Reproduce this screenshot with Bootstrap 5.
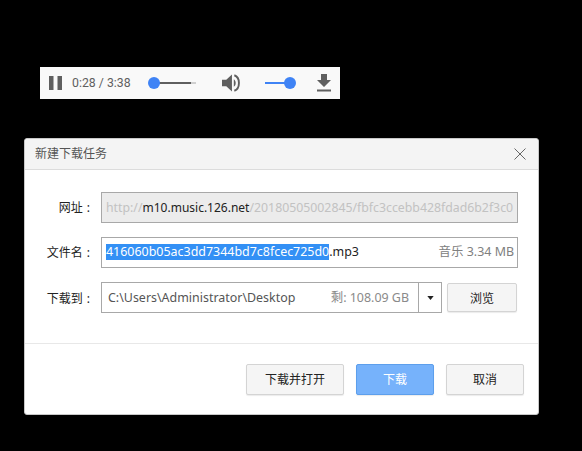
<!DOCTYPE html>
<html lang="zh-CN">
<head>
    <meta charset="UTF-8">
    <meta name="viewport" content="width=device-width, initial-scale=1.0">
    <title>新建下载任务</title>
    <link href="https://cdn.jsdelivr.net/npm/bootstrap@5.3.0/dist/css/bootstrap.min.css" rel="stylesheet">
    <style>
        html, body { height: 100%; overflow: hidden; }
        body { background: #000; padding: 67px 0 0 24px; font-family: "Noto Sans", "Noto Sans CJK SC", sans-serif; font-size: 12px; color: #222; }
        /* audio player */
        .player { width: 300px; height: 32px; margin-left: 16px; background: #f9f9f9; color: #5f5f5f; padding-left: 9px; }
        .player > * { flex: none; }
        .player-time { width: 58px; margin-left: 10px; font-size: 12.3px; font-family: Roboto, "Liberation Sans", sans-serif; white-space: nowrap; }
        .track { height: 2px; position: relative; }
        .track-seek { width: 42px; margin-left: 24px; background: linear-gradient(90deg, #5f5f5f 88%, #d0d0d0 88%); }
        .track-vol { width: 25px; margin-left: 25px; background: #3f83f5; }
        .knob { position: absolute; top: -5px; width: 12px; height: 12px; border-radius: 50%; background: #3f83f5; }
        .knob-start { left: -6px; }
        .knob-end { right: -6px; }
        .vol-icon { margin-left: 26px; }
        .dl-icon { margin-left: 27px; }
        /* dialog */
        .dlg { width: 515px; height: 277px; margin-top: 39px; background: #fff; border: 1px solid #c8c8c8; border-radius: 3px; }
        .dlg-head { height: 31px; background: #f4f4f4; border-bottom: 1px solid #dcdcdc; padding: 0 12px 0 10px; color: #555; border-radius: 3px 3px 0 0; }
        .dlg-body { padding: 22px 21px 0 0; height: 174px; border-bottom: 1px solid #e8e8e8; }
        .fld-row { height: 31px; margin-bottom: 14px; }
        .fld-row-last { margin-top: 2px; }
        .fld-label { width: 76px; flex: none; text-align: right; padding: 1px 11px 0 0; word-spacing: 1px; color: #222; white-space: nowrap; }
        .fld-row-last .fld-label { padding-top: 3px; }
        .fld { height: 31px; flex: none; border: 1px solid #a8a8a8; white-space: nowrap; overflow: hidden; font-size: 12.45px; }
        .fld-url { width: 417px; background: #ececec; color: #c2c2c2; padding: 1px 4px 0; font-size: 12.3px; }
        .fld-url b { font-weight: 400; font-size: 12px; color: #222; }
        .fld-name { width: 417px; padding: 0 3px 0 4px; color: #222; }
        .sel { background: #3390f5; color: #fff; line-height: 16px; height: 16px; display: inline-block; margin-bottom: 2px; }
        .name-size { color: #808080; }
        .fld-path { width: 318px; padding: 2px 9px 0 6px; color: #555; }
        .path-free { color: #8a8a8a; }
        .path-caret { width: 23px; height: 31px; flex: none; border: 1px solid #a8a8a8; border-left: 0; background: #fff; }
        .btn-dlg { border: 1px solid #d4d4d4; border-radius: 2px; background: #f5f5f5; color: #222; font-size: 12px; box-shadow: 0 1px 1px rgba(0,0,0,.08); padding: 0; flex: none; }
        .btn-browse { width: 70px; height: 29px; margin-left: 5px; padding-top: 2px; }
        .dlg-foot { padding: 20px 14px 0 0; }
        .btn-foot { height: 31px; }
        .btn-w98 { width: 98px; }
        .btn-w78 { width: 78px; }
        .btn-go { background: #76b2fb; border-color: #5d9fec; color: #fff; }
    </style>
</head>
<body>
    <div class="player d-flex align-items-center">
        <svg width="13" height="14" viewBox="0 0 13 14"><rect x="0" y="0" width="4.500" height="14" fill="#5f5f5f"/><rect x="8.500" y="0" width="4.500" height="14" fill="#5f5f5f"/></svg>
        <span class="player-time">0:28 / 3:38</span>
        <div class="track track-seek"><span class="knob knob-start"></span></div>
        <svg class="vol-icon" width="18" height="20" viewBox="0 0 19 20"><path d="M0 6.500h4.500L10.500 1v18l-6-5.500H0z" fill="#5f5f5f"/><path d="M12.500 6c2.600 1.800 2.600 6.200 0 8z" fill="#5f5f5f"/><path d="M13 1.800c6.500 2.200 6.500 14.200 0 16.400" fill="none" stroke="#5f5f5f" stroke-width="2"/></svg>
        <div class="track track-vol"><span class="knob knob-end"></span></div>
        <svg class="dl-icon" width="14" height="18" viewBox="0 0 14 18"><path d="M4 0h6v6h4l-7 7-7-7h4z" fill="#5f5f5f"/><rect x="0" y="15.500" width="14" height="2" fill="#5f5f5f"/></svg>
    </div>

    <div class="dlg">
        <div class="dlg-head d-flex align-items-center justify-content-between">
            <span>新建下载任务</span>
            <svg width="12" height="12" viewBox="0 0 12 12"><path d="M.5.5l11 11M11.500.5l-11 11" stroke="#666" stroke-width="1" fill="none"/></svg>
        </div>
        <div class="dlg-body">
            <div class="fld-row d-flex align-items-center">
                <span class="fld-label">网址&nbsp;:</span>
                <div class="fld fld-url d-flex align-items-center"><span>http://<b>m10.music.126.net</b>/20180505002845/fbfc3ccebb428fdad6b2f3c0</span></div>
            </div>
            <div class="fld-row d-flex align-items-center">
                <span class="fld-label">文件名&nbsp;:</span>
                <div class="fld fld-name d-flex align-items-center justify-content-between">
                    <span><span class="sel">416060b05ac3dd7344bd7c8fcec725d0</span>.mp3</span>
                    <span class="name-size">音乐 3.34 MB</span>
                </div>
            </div>
            <div class="fld-row fld-row-last d-flex align-items-center">
                <span class="fld-label">下载到&nbsp;:</span>
                <div class="fld fld-path d-flex align-items-center justify-content-between">
                    <span>C:\Users\Administrator\Desktop</span>
                    <span class="path-free">剩: 108.09 GB</span>
                </div>
                <div class="path-caret d-flex align-items-center justify-content-center">
                    <svg width="7" height="4" viewBox="0 0 8 5"><path d="M0 0h8L4 5z" fill="#222"/></svg>
                </div>
                <button type="button" class="btn btn-dlg btn-browse">浏览</button>
            </div>
        </div>
        <div class="dlg-foot d-flex justify-content-end gap-2">
            <button type="button" class="btn btn-dlg btn-foot btn-w98">下载并打开</button>
            <button type="button" class="btn btn-dlg btn-foot btn-w78 btn-go ms-1">下载</button>
            <button type="button" class="btn btn-dlg btn-foot btn-w78 ms-1">取消</button>
        </div>
    </div>
    <script src="https://cdn.jsdelivr.net/npm/bootstrap@5.3.0/dist/js/bootstrap.bundle.min.js"></script>
</body>
</html>
